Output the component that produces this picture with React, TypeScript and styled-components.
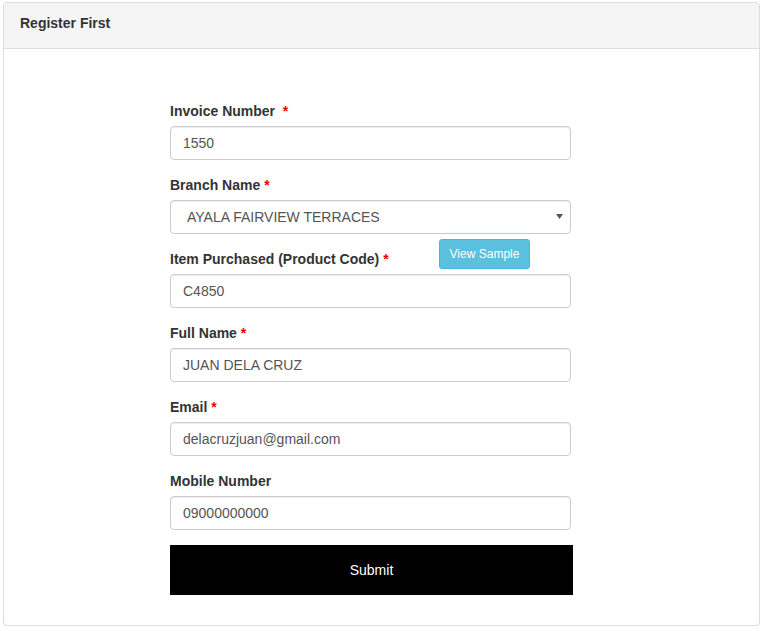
import * as React from 'react';
import styled, { createGlobalStyle } from 'styled-components';

const GlobalStyle = createGlobalStyle`
  body {
    margin: 0;
    background: #fff;
    font-family: "Liberation Sans", Arial, sans-serif;
    font-size: 14px;
    color: #333;
  }
`;

// page around the panel
const Page = styled.div`
  padding: 2px 3px 0 3px;
`;

const Panel = styled.div`
  border: 1px solid #ddd;
  border-radius: 4px;
  background: #fff;
  box-shadow: 0 1px 1px rgba(0, 0, 0, 0.05);
`;

const PanelHeading = styled.div`
  background: #f5f5f5;
  border-bottom: 1px solid #ddd;
  border-radius: 3px 3px 0 0;
  padding: 10px 16px 15px;
  font-weight: bold;
  font-size: 14px;
  line-height: 20px;
  color: #333;
`;

const PanelBody = styled.div`
  padding: 52px 0 30px 166px;
`;

const Form = styled.form`
  width: 403px;
  margin: 0;
`;

const FormGroup = styled.div`
  margin-bottom: 15px;
`;

const LabelRow = styled.div`
  display: flex;
  align-items: flex-end;
  height: 20px;
  margin-bottom: 5px;
`;

const Label = styled.label<{ $width?: number }>`
  font-weight: bold;
  font-size: 14px;
  line-height: 20px;
  color: #333;
  width: ${(p) => (p.$width ? `${p.$width}px` : 'auto')};
  white-space: nowrap;
`;

const Required = styled.span`
  color: #e00;
`;

const SampleButton = styled.button`
  width: 91px;
  height: 30px;
  margin-top: -10px;
  padding: 5px 0;
  font-family: inherit;
  font-size: 12px;
  line-height: 18px;
  color: #fff;
  background: #5bc0de;
  border: 1px solid #46b8da;
  border-radius: 3px;
`;

const Input = styled.input`
  display: block;
  box-sizing: border-box;
  width: 401px;
  height: 34px;
  padding: 6px 12px;
  font-family: inherit;
  font-size: 14px;
  line-height: 20px;
  color: #555;
  background: #fff;
  border: 1px solid #ccc;
  border-radius: 4px;
  box-shadow: inset 0 1px 1px rgba(0, 0, 0, 0.075);
  outline: none;
`;

const SelectWrap = styled.div`
  position: relative;
  width: 401px;
`;

const Select = styled.select`
  display: block;
  box-sizing: border-box;
  width: 401px;
  height: 34px;
  padding: 6px 12px 6px 16px;
  font-family: inherit;
  font-size: 14px;
  color: #555;
  background: #fff;
  border: 1px solid #ccc;
  border-radius: 4px;
  box-shadow: inset 0 1px 1px rgba(0, 0, 0, 0.075);
  appearance: none;
  outline: none;
`;

const Caret = styled.svg`
  position: absolute;
  right: 8px;
  top: 14px;
  pointer-events: none;
`;

const SubmitButton = styled.button`
  display: block;
  width: 403px;
  height: 50px;
  font-family: inherit;
  font-size: 14px;
  color: #fff;
  background: #000;
  border: none;
  border-radius: 0;
`;

export default function App() {
  return (
    <>
      <GlobalStyle />
      <Page>
        <Panel>
          <PanelHeading>Register First</PanelHeading>
          <PanelBody>
            <Form onSubmit={(e) => e.preventDefault()}>
              <FormGroup>
                <LabelRow>
                  <Label>
                    Invoice Number&nbsp; <Required>*</Required>
                  </Label>
                </LabelRow>
                <Input defaultValue="1550" />
              </FormGroup>
              <FormGroup>
                <LabelRow>
                  <Label>
                    Branch Name <Required>*</Required>
                  </Label>
                </LabelRow>
                <SelectWrap>
                  <Select defaultValue="ayala">
                    <option value="ayala">AYALA FAIRVIEW TERRACES</option>
                  </Select>
                  <Caret width="7" height="5" viewBox="0 0 7 5">
                    <path d="M0 0h7L3.5 5z" fill="#555" />
                  </Caret>
                </SelectWrap>
              </FormGroup>
              <FormGroup>
                <LabelRow>
                  <Label $width={269}>
                    Item Purchased (Product Code) <Required>*</Required>
                  </Label>
                  <SampleButton type="button">View Sample</SampleButton>
                </LabelRow>
                <Input defaultValue="C4850" />
              </FormGroup>
              <FormGroup>
                <LabelRow>
                  <Label>
                    Full Name <Required>*</Required>
                  </Label>
                </LabelRow>
                <Input defaultValue="JUAN DELA CRUZ" />
              </FormGroup>
              <FormGroup>
                <LabelRow>
                  <Label>
                    Email <Required>*</Required>
                  </Label>
                </LabelRow>
                <Input defaultValue="delacruzjuan@gmail.com" />
              </FormGroup>
              <FormGroup>
                <LabelRow>
                  <Label>Mobile Number</Label>
                </LabelRow>
                <Input defaultValue="09000000000" />
              </FormGroup>
              <SubmitButton type="submit">Submit</SubmitButton>
            </Form>
          </PanelBody>
        </Panel>
      </Page>
    </>
  );
}
